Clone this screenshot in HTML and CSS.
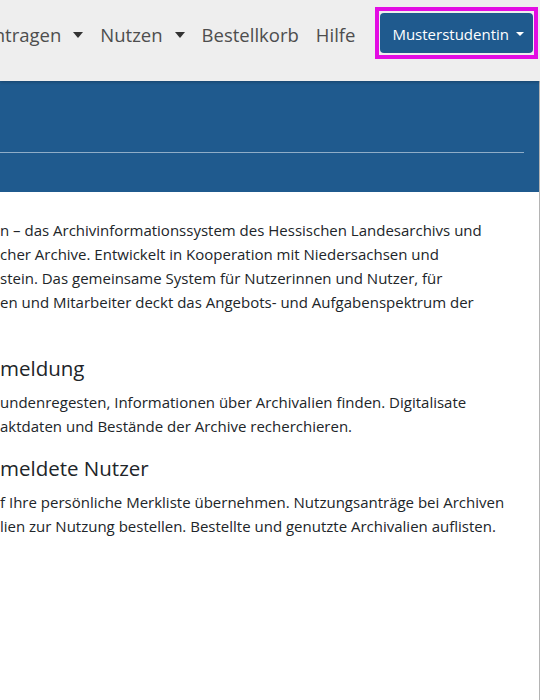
FILE: index.html
```html
<html>
<head>
    <meta charset="utf-8">
    <link rel="stylesheet" href="styles.css">
</head>
<body>
    <header class="topbar">
        <nav class="nav-items">
            <a class="nav-link dropdown">ntragen</a>
            <a class="nav-link dropdown">Nutzen</a>
            <a class="nav-link">Bestellkorb</a>
            <a class="nav-link">Hilfe</a>
        </nav>
        <div class="user-box">
            <button class="user-btn">Musterstudentin</button>
        </div>
    </header>

    <div class="page">
        <div class="banner">
            <div class="banner-rule"></div>
        </div>

        <main class="intro">
            <p class="lead-text">n – das Archivinformationssystem des Hessischen Landesarchivs und<br>cher Archive. Entwickelt in Kooperation mit Niedersachsen und<br>stein. Das gemeinsame System für Nutzerinnen und Nutzer, für<br>en und Mitarbeiter deckt das Angebots- und Aufgabenspektrum der</p>

            <h3>meldung</h3>
            <p>undenregesten, Informationen über Archivalien finden. Digitalisate<br>aktdaten und Bestände der Archive recherchieren.</p>

            <h3>meldete Nutzer</h3>
            <p>f Ihre persönliche Merkliste übernehmen. Nutzungsanträge bei Archiven<br>lien zur Nutzung bestellen. Bestellte und genutzte Archivalien auflisten.</p>
        </main>
    </div>
</body>
</html>
```

FILE: styles.css
```css
html, body {
    width: 100%;
    height: 100%;
    overflow: hidden;
}
body {
    margin: 0;
    padding: 0;
    font-family: "Open Sans", "Noto Sans", sans-serif;
    color: #212529;
    background-color: #fff;
}
.topbar {
    display: flex;
    justify-content: flex-end;
    align-items: flex-start;
    height: 81px;
    padding-right: 2px;
    background-color: #eeeeee;
    box-shadow: 0 1px 3px rgba(0, 0, 0, 0.25);
    position: relative;
    z-index: 1;
    overflow: hidden;
}
.nav-items {
    display: flex;
    align-items: center;
    white-space: nowrap;
    margin: 22px 20px 0 0;
}
.nav-link {
    font-size: 18.5px;
    line-height: 26px;
    color: #4d4d4d;
    padding: 0 8.5px;
}
.nav-link:last-child {
    padding-right: 0;
}
.dropdown::after {
    content: "";
    display: inline-block;
    margin-left: 12px;
    vertical-align: 4px;
    border-top: 6px solid #333;
    border-left: 5px solid transparent;
    border-right: 5px solid transparent;
}
.user-box {
    flex-shrink: 0;
    margin-top: 7px;
    padding: 2px 1px;
    border: 4px solid #e30ce3;
}
.user-btn {
    display: block;
    white-space: nowrap;
    font-family: inherit;
    font-size: 15px;
    line-height: 24px;
    color: #fff;
    background-color: #1f5a8e;
    border: none;
    border-radius: 4px;
    padding: 9px 9px 7px 12px;
}
.user-btn::after {
    content: "";
    display: inline-block;
    margin-left: 7px;
    vertical-align: 4px;
    border-top: 4px solid #fff;
    border-left: 4px solid transparent;
    border-right: 4px solid transparent;
}
.page {
    width: 539px;
    height: 100%;
    border-right: 1px solid #b4b4b4;
}
.banner {
    background-color: #1f5a8e;
    padding: 71px 15px 39px 0;
}
.banner-rule {
    height: 1px;
    background-color: #8fadc8;
}
.intro {
    padding-top: 26px;
    font-size: 15px;
    line-height: 24px;
    white-space: nowrap;
}
.intro p {
    margin: 0 0 16px 0;
}
.intro .lead-text {
    margin-bottom: 40px;
}
.intro h3 {
    font-size: 20.5px;
    font-weight: 400;
    line-height: 29px;
    margin: 0 0 7px 0;
}
```
